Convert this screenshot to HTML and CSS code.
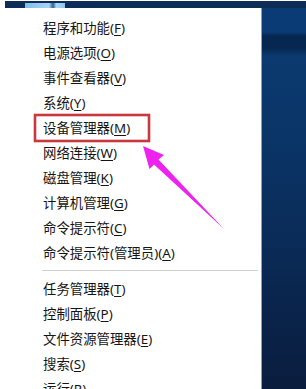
FILE: index.html
```html
<!DOCTYPE html>
<html lang="zh-CN">
<head>
  <meta charset="UTF-8" />
  <meta name="viewport" content="width=device-width, initial-scale=1.0">
  <title>Win+X 菜单</title>
  <link rel="stylesheet" href="styles.css">
</head>
<body>

  <!-- strip of the window behind the menu -->
  <div class="topbar">
    <div class="topbar-gap"></div>
    <div class="topbar-strip">
      <div class="topbar-icon"></div>
    </div>
  </div>

  <div class="screen">
    <div class="menu">
      <ul class="menu-list">
        <li>程序和功能(<u>F</u>)</li>
        <li>电源选项(<u>O</u>)</li>
        <li>事件查看器(<u>V</u>)</li>
        <li>系统(<u>Y</u>)</li>
        <li>设备管理器(<u>M</u>)</li>
        <li>网络连接(<u>W</u>)</li>
        <li>磁盘管理(<u>K</u>)</li>
        <li>计算机管理(<u>G</u>)</li>
        <li>命令提示符(<u>C</u>)</li>
        <li>命令提示符(管理员)(<u>A</u>)</li>
      </ul>
      <div class="separator"></div>
      <ul class="menu-list">
        <li>任务管理器(<u>T</u>)</li>
        <li>控制面板(<u>P</u>)</li>
        <li>文件资源管理器(<u>E</u>)</li>
        <li>搜索(<u>S</u>)</li>
        <li>运行(<u>R</u>)</li>
      </ul>
    </div>
    <div class="desktop"></div>
  </div>

  <!-- Annotation: red box + arrow drawn over the menu -->
  <svg class="annotation" width="306" height="389" viewBox="0 0 306 389">
    <rect x="35" y="115" width="114" height="26" fill="none" stroke="#c9383c" stroke-width="2.6" />
    <polygon points="143,146 164,155 158.5,159.5 224,229 154,164.5 149.5,169" fill="#ee22ee" />
  </svg>

</body>
</html>
```

FILE: styles.css
```css
/* General reset */
html, body {
  margin: 0;
  padding: 0;
  width: 306px;
  height: 389px;
  overflow: hidden;
  background: #fff;
  font-family: "Noto Sans", "Noto Sans CJK SC", sans-serif;
}

body {
  position: relative;
  display: flex;
  flex-direction: column;
}

.topbar {
  display: flex;
  height: 9px;
  padding-top: 1px;
  background: #fff;
}

.topbar-gap {
  width: 5px;
}

.topbar-strip {
  flex: 1;
  background: #0d2d57;
  padding: 2px 0 0 20px;
}

.topbar-icon {
  width: 40px;
  height: 5px;
  background: linear-gradient(to right, #7fbde9 0, #a8d6f3 60%, #2f5f8f 70%, #a8d6f3 78%, #8cc6ec 100%);
}

.screen {
  flex: 1;
  display: flex;
}

.menu {
  width: 261px;
  background: #fff;
  border-right: 1px solid #9c9c9c;
  padding-top: 8px;
}

.menu-list {
  list-style: none;
  margin: 0;
  padding: 0;
}

.menu-list li {
  height: 25px;
  line-height: 25px;
  padding-left: 43px;
  font-size: 13.4px;
  color: #151515;
  white-space: nowrap;
}

.menu-list u {
  text-decoration-thickness: 1px;
  text-underline-offset: 2px;
}

.separator {
  height: 1px;
  background: #cfcfcf;
  margin: 4px 3px 6px 42px;
}

.desktop {
  flex: 1;
  background: linear-gradient(to bottom,
    #0b3b75 0,
    #0b3b75 24px,
    #06274f 28px,
    #06274f 40px,
    #0b3a70 48px,
    #0a3466 140px,
    #0a2c58 230px,
    #0a2248 320px,
    #0a1d3e 380px);
}

/* Annotation layer */
.annotation {
  position: absolute;
  top: 0;
  left: 0;
  pointer-events: none;
}
```
